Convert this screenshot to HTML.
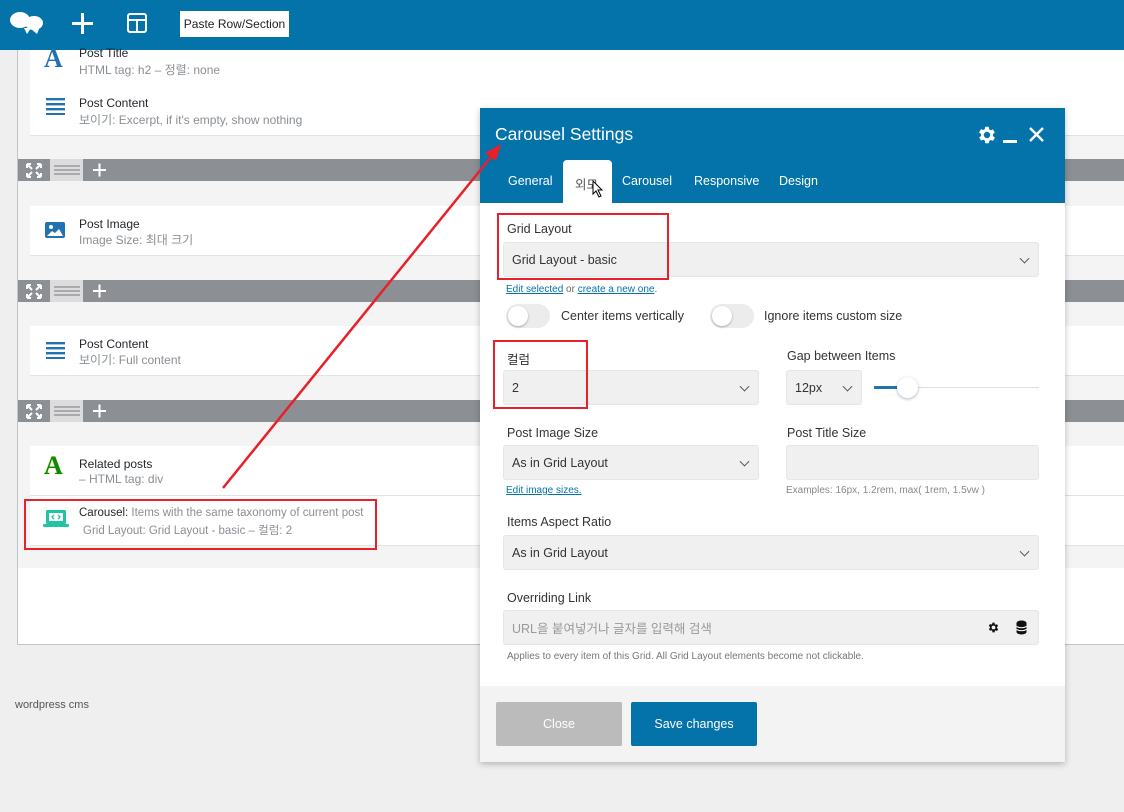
<!DOCTYPE html>
<html><head><meta charset="utf-8">
<style>
*{box-sizing:border-box;margin:0;padding:0}
body{width:1124px;height:812px;background:#efefef;font-family:"Liberation Sans","Noto Sans CJK KR",sans-serif;position:relative;overflow:hidden;font-size:12px;color:#333}
.a{position:absolute}
.top{left:0;top:0;width:1124px;height:50px;background:#0473aa}
.builder{left:17px;top:40px;width:1120px;height:605px;background:#fff;border:1px solid #c3c4c7}
.lt{background:#f4f4f4}
.wb{background:#fff;border-bottom:1px solid #e2e2e2}
.bar{background:#8c8f94;height:22px}
.t{font-size:12px;color:#23282d}
.s{font-size:12px;color:#8a8f94}
.lbl{font-size:12.5px;color:#333}
.sel{background:#f0f0f0;border:1px solid #e6e6e6;border-radius:3px;font-size:12.5px;color:#333;padding-left:8px;display:flex;align-items:center}
.chev{position:absolute;right:10px;top:50%;width:7px;height:7px;border-right:1.5px solid #555;border-bottom:1.5px solid #555;transform:translateY(-70%) rotate(45deg)}
.lnk{color:#0473aa;text-decoration:underline;font-size:10px}
.tog{width:44px;height:24px;border-radius:12px;background:#ececec}
.tog:after{content:"";position:absolute;left:2px;top:2px;width:20px;height:20px;border-radius:50%;background:#fff;box-shadow:0 1px 2px rgba(0,0,0,.3)}
.red{border:2px solid #e8202a}
</style></head><body>
<div class="a top">
  <svg class="a" style="left:9px;top:10px" width="34" height="26" viewBox="0 0 34 26"><ellipse cx="11" cy="10" rx="10" ry="8" fill="#fff"/><ellipse cx="25" cy="13" rx="9" ry="7" fill="#fff"/><path d="M15 18 L22 18 L18 24 Z M22 19 L30 19 L28 24Z" fill="#fff"/></svg>
  <div class="a" style="left:72px;top:22px;width:21px;height:3px;background:#fff"></div>
  <div class="a" style="left:81px;top:13px;width:3px;height:21px;background:#fff"></div>
  <div class="a" style="left:127px;top:13px;width:20px;height:20px;border:2px solid #fff;border-radius:3px"></div>
  <div class="a" style="left:127px;top:19px;width:20px;height:2px;background:#fff"></div>
  <div class="a" style="left:136px;top:19px;width:2px;height:13px;background:#fff"></div>
  <div class="a" style="left:180px;top:11px;width:109px;height:26px;background:#fff;font-size:12px;color:#222;line-height:26px;text-align:center">Paste Row/Section</div>
</div>
<div class="a builder" style="top:50px;border-top:none;height:595px">
</div>
<div class="a lt" style="left:18px;top:50px;width:1106px;height:518px"></div>
<div class="a wb" style="left:30px;top:50px;width:1094px;height:86px"></div>
<div class="a" style="left:44px;top:44px;font:bold 26px 'Liberation Serif',serif;color:#2271b1">A</div>
<div class="a t" style="left:79px;top:46px">Post Title</div>
<div class="a s" style="left:79px;top:61px">HTML tag: h2 – 정렬: none</div>
<svg class="a" style="left:46px;top:97px" width="19" height="18"><rect y="1" width="19" height="2.4" fill="#2271b1"/><rect y="6" width="19" height="2.4" fill="#2271b1"/><rect y="11" width="19" height="2.4" fill="#2271b1"/><rect y="16" width="19" height="2.4" fill="#2271b1"/></svg>
<div class="a t" style="left:79px;top:96px">Post Content</div>
<div class="a s" style="left:79px;top:111px">보이기: Excerpt, if it's empty, show nothing</div>

<div class="a bar" style="left:18px;top:159px;width:1106px"></div>
<div class="a bar" style="left:18px;top:280px;width:1106px"></div>
<div class="a bar" style="left:18px;top:400px;width:1106px"></div>

<div class="a wb" style="left:30px;top:206px;width:1094px;height:50px"></div>
<svg class="a" style="left:45px;top:222px" width="20" height="16"><rect width="20" height="16" rx="2" fill="#2271b1"/><circle cx="6" cy="5" r="2" fill="#fff"/><path d="M2 14 L7 9 L10 11 L14 7 L18 14Z" fill="#fff"/></svg>
<div class="a t" style="left:79px;top:217px">Post Image</div>
<div class="a s" style="left:79px;top:231px">Image Size: 최대 크기</div>

<div class="a wb" style="left:30px;top:326px;width:1094px;height:50px"></div>
<svg class="a" style="left:46px;top:341px" width="19" height="18"><rect y="1" width="19" height="2.4" fill="#2271b1"/><rect y="6" width="19" height="2.4" fill="#2271b1"/><rect y="11" width="19" height="2.4" fill="#2271b1"/><rect y="16" width="19" height="2.4" fill="#2271b1"/></svg>
<div class="a t" style="left:79px;top:337px">Post Content</div>
<div class="a s" style="left:79px;top:351px">보이기: Full content</div>

<div class="a wb" style="left:30px;top:446px;width:1094px;height:50px"></div>
<div class="a" style="left:44px;top:451px;font:bold 26px 'Liberation Serif',serif;color:#0a8a0a;text-shadow:0 0 1px #e5c100">A</div>
<div class="a t" style="left:79px;top:457px">Related posts</div>
<div class="a s" style="left:79px;top:472px">– HTML tag: div</div>
<div class="a wb" style="left:30px;top:496px;width:1094px;height:50px"></div>
<svg class="a" style="left:43px;top:509px" width="26" height="20"><rect x="3" y="1" width="20" height="14" rx="1.5" fill="#1fc5a0"/><rect x="0" y="15" width="26" height="3" rx="1" fill="#1fc5a0"/><rect x="6" y="4" width="14" height="8" fill="#fff"/><path d="M11 6 L9 8 L11 10 M15 6 L17 8 L15 10" stroke="#1fc5a0" stroke-width="1.3" fill="none"/></svg>
<div class="a" style="left:79px;top:507px;font-size:11.5px;color:#8a8f94"><span style="color:#23282d">Carousel:</span> Items with the same taxonomy of current post</div>
<div class="a s" style="left:83px;top:522px;font-size:11.5px">Grid Layout: Grid Layout - basic – 컬럼: 2</div>
<div class="a" style="left:18px;top:568px;width:1106px;height:76px;background:#fff"></div>
<div class="a" style="left:17px;top:50px;width:1px;height:595px;background:#c3c4c7"></div>
<div class="a" style="left:17px;top:644px;width:1107px;height:1px;background:#c3c4c7"></div>

<div class="a" style="left:15px;top:699px;font-size:11px;color:#555">wordpress cms</div>

<div class="a" style="left:480px;top:108px;width:585px;height:654px;background:#fff;box-shadow:0 2px 6px rgba(0,0,0,.25)">
  <div class="a" style="left:0;top:0;width:585px;height:95px;background:#0473aa"></div>
  <div class="a" style="left:15px;top:16px;font-size:17.5px;color:#fff">Carousel Settings</div>
  <svg class="a" style="left:496px;top:16px" width="22" height="22" viewBox="0 0 24 24"><path fill="#fff" d="M19.4 13a7.5 7.5 0 0 0 0-2l2.1-1.6-2-3.5-2.5 1a7 7 0 0 0-1.7-1L15 3h-4l-.4 2.6a7 7 0 0 0-1.7 1l-2.5-1-2 3.5L6.6 11a7.5 7.5 0 0 0 0 2l-2.1 1.6 2 3.5 2.5-1a7 7 0 0 0 1.7 1L11 21h4l.4-2.6a7 7 0 0 0 1.7-1l2.5 1 2-3.5zM13 15.5a3.5 3.5 0 1 1 0-7 3.5 3.5 0 0 1 0 7z" transform="translate(-1 0)"/></svg>
  <div class="a" style="left:523px;top:32px;width:14px;height:2.5px;background:#fff"></div>
  <svg class="a" style="left:549px;top:19px" width="15" height="15"><path d="M1 1L14 14M14 1L1 14" stroke="#fff" stroke-width="2.4"/></svg>
  <div class="a" style="left:28px;top:66px;font-size:12.5px;color:#fff">General</div>
  <div class="a" style="left:83px;top:52px;width:49px;height:43px;background:#fff;border-radius:4px 4px 0 0"></div>
  <div class="a" style="left:95px;top:66px;font-size:12.5px;color:#555">외모</div>
  <svg class="a" style="left:112px;top:72px" width="12" height="18"><path d="M1 1 L1 14 L4 11 L7 17 L9 16 L6 10 L10 10 Z" fill="#fff" stroke="#000" stroke-width="1"/></svg>
  <div class="a" style="left:142px;top:66px;font-size:12.5px;color:#fff">Carousel</div>
  <div class="a" style="left:214px;top:66px;font-size:12.5px;color:#fff">Responsive</div>
  <div class="a" style="left:299px;top:66px;font-size:12.5px;color:#fff">Design</div>

  <div class="a lbl" style="left:27px;top:114px">Grid Layout</div>
  <div class="a sel" style="left:23px;top:134px;width:536px;height:35px">Grid Layout - basic<span class="chev"></span></div>
  <div class="a" style="left:26px;top:176px;font-size:10px;color:#666"><span class="lnk">Edit selected</span> or <span class="lnk">create a new one</span>.</div>
  <div class="a tog" style="left:26px;top:196px"></div>
  <div class="a lbl" style="left:81px;top:201px">Center items vertically</div>
  <div class="a tog" style="left:230px;top:196px"></div>
  <div class="a lbl" style="left:284px;top:201px">Ignore items custom size</div>

  <div class="a lbl" style="left:27px;top:241px">컬럼</div>
  <div class="a sel" style="left:23px;top:262px;width:256px;height:35px">2<span class="chev"></span></div>
  <div class="a lbl" style="left:307px;top:241px">Gap between Items</div>
  <div class="a sel" style="left:306px;top:262px;width:76px;height:35px">12px<span class="chev"></span></div>
  <div class="a" style="left:394px;top:279px;width:165px;height:1px;background:#ddd"></div>
  <div class="a" style="left:394px;top:278px;width:30px;height:3px;background:#2271b1"></div>
  <div class="a" style="left:417px;top:269px;width:21px;height:21px;border-radius:50%;background:#fff;box-shadow:0 1px 3px rgba(0,0,0,.3)"></div>

  <div class="a lbl" style="left:27px;top:318px">Post Image Size</div>
  <div class="a sel" style="left:23px;top:337px;width:256px;height:35px">As in Grid Layout<span class="chev"></span></div>
  <div class="a lnk" style="left:26px;top:377px">Edit image sizes.</div>
  <div class="a lbl" style="left:307px;top:318px">Post Title Size</div>
  <div class="a sel" style="left:306px;top:337px;width:253px;height:35px"></div>
  <div class="a" style="left:306px;top:377px;font-size:10px;color:#888">Examples: 16px, 1.2rem, max( 1rem, 1.5vw )</div>

  <div class="a lbl" style="left:27px;top:407px">Items Aspect Ratio</div>
  <div class="a sel" style="left:23px;top:427px;width:536px;height:35px">As in Grid Layout<span class="chev"></span></div>

  <div class="a lbl" style="left:27px;top:483px">Overriding Link</div>
  <div class="a sel" style="left:23px;top:502px;width:536px;height:35px;color:#999">URL을 붙여넣거나 글자를 입력해 검색</div>
  <svg class="a" style="left:507px;top:513px" width="13" height="13" viewBox="0 0 24 24"><path fill="#111" d="M19.4 13a7.5 7.5 0 0 0 0-2l2.1-1.6-2-3.5-2.5 1a7 7 0 0 0-1.7-1L15 3h-4l-.4 2.6a7 7 0 0 0-1.7 1l-2.5-1-2 3.5L6.6 11a7.5 7.5 0 0 0 0 2l-2.1 1.6 2 3.5 2.5-1a7 7 0 0 0 1.7 1L11 21h4l.4-2.6a7 7 0 0 0 1.7-1l2.5 1 2-3.5zM13 15.5a3.5 3.5 0 1 1 0-7 3.5 3.5 0 0 1 0 7z" transform="translate(-1 0)"/></svg>
  <svg class="a" style="left:536px;top:512px" width="11" height="15"><ellipse cx="5.5" cy="3" rx="5" ry="2.5" fill="#111"/><rect x=".5" y="3" width="10" height="9" fill="#111"/><ellipse cx="5.5" cy="12" rx="5" ry="2.5" fill="#111"/><path d="M.5 6.5Q5.5 9 10.5 6.5M.5 9.5Q5.5 12 10.5 9.5" stroke="#fff" fill="none"/></svg>
  <div class="a" style="left:27px;top:543px;font-size:10px;color:#777">Applies to every item of this Grid. All Grid Layout elements become not clickable.</div>

  <div class="a" style="left:0;top:578px;width:585px;height:76px;background:#f3f3f3"></div>
  <div class="a" style="left:16px;top:594px;width:126px;height:44px;background:#bbb;border-radius:2px;color:#fff;font-size:12.5px;text-align:center;line-height:44px">Close</div>
  <div class="a" style="left:151px;top:594px;width:126px;height:44px;background:#0473aa;border-radius:2px;color:#fff;font-size:12.5px;text-align:center;line-height:44px">Save changes</div>
</div>

<svg class="a" style="left:0;top:0" width="130" height="430">
  <g id="g1">
    <rect x="18" y="159" width="32" height="22" fill="#8c8f94"/>
    <rect x="50" y="159" width="33" height="22" fill="#dcdcde"/>
    <path d="M28 165l4 4M40 165l-4 4M28 176l4-4M40 176l-4-4M27 164h4M27 164v4M41 164h-4M41 164v4M27 177h4M27 177v-4M41 177h-4M41 177v-4" stroke="#fff" stroke-width="2"/>
    <path d="M54 166h26M54 170h26M54 174h26" stroke="#999" stroke-width="1.5"/>
    <path d="M93 170h13M99.5 163.5v13" stroke="#fff" stroke-width="2"/>
  </g>
  <use href="#g1" y="121"/>
  <use href="#g1" y="241"/>
</svg>

<div class="a red" style="left:497px;top:213px;width:172px;height:67px"></div>
<div class="a red" style="left:493px;top:340px;width:95px;height:69px"></div>
<div class="a red" style="left:24px;top:499px;width:353px;height:51px"></div>
<svg class="a" style="left:0;top:0" width="1124" height="812"><line x1="223" y1="488" x2="495" y2="152" stroke="#e8202a" stroke-width="2.5"/><path d="M501 144 L485 153 L496 161 Z" fill="#e8202a"/></svg>
</body></html>
